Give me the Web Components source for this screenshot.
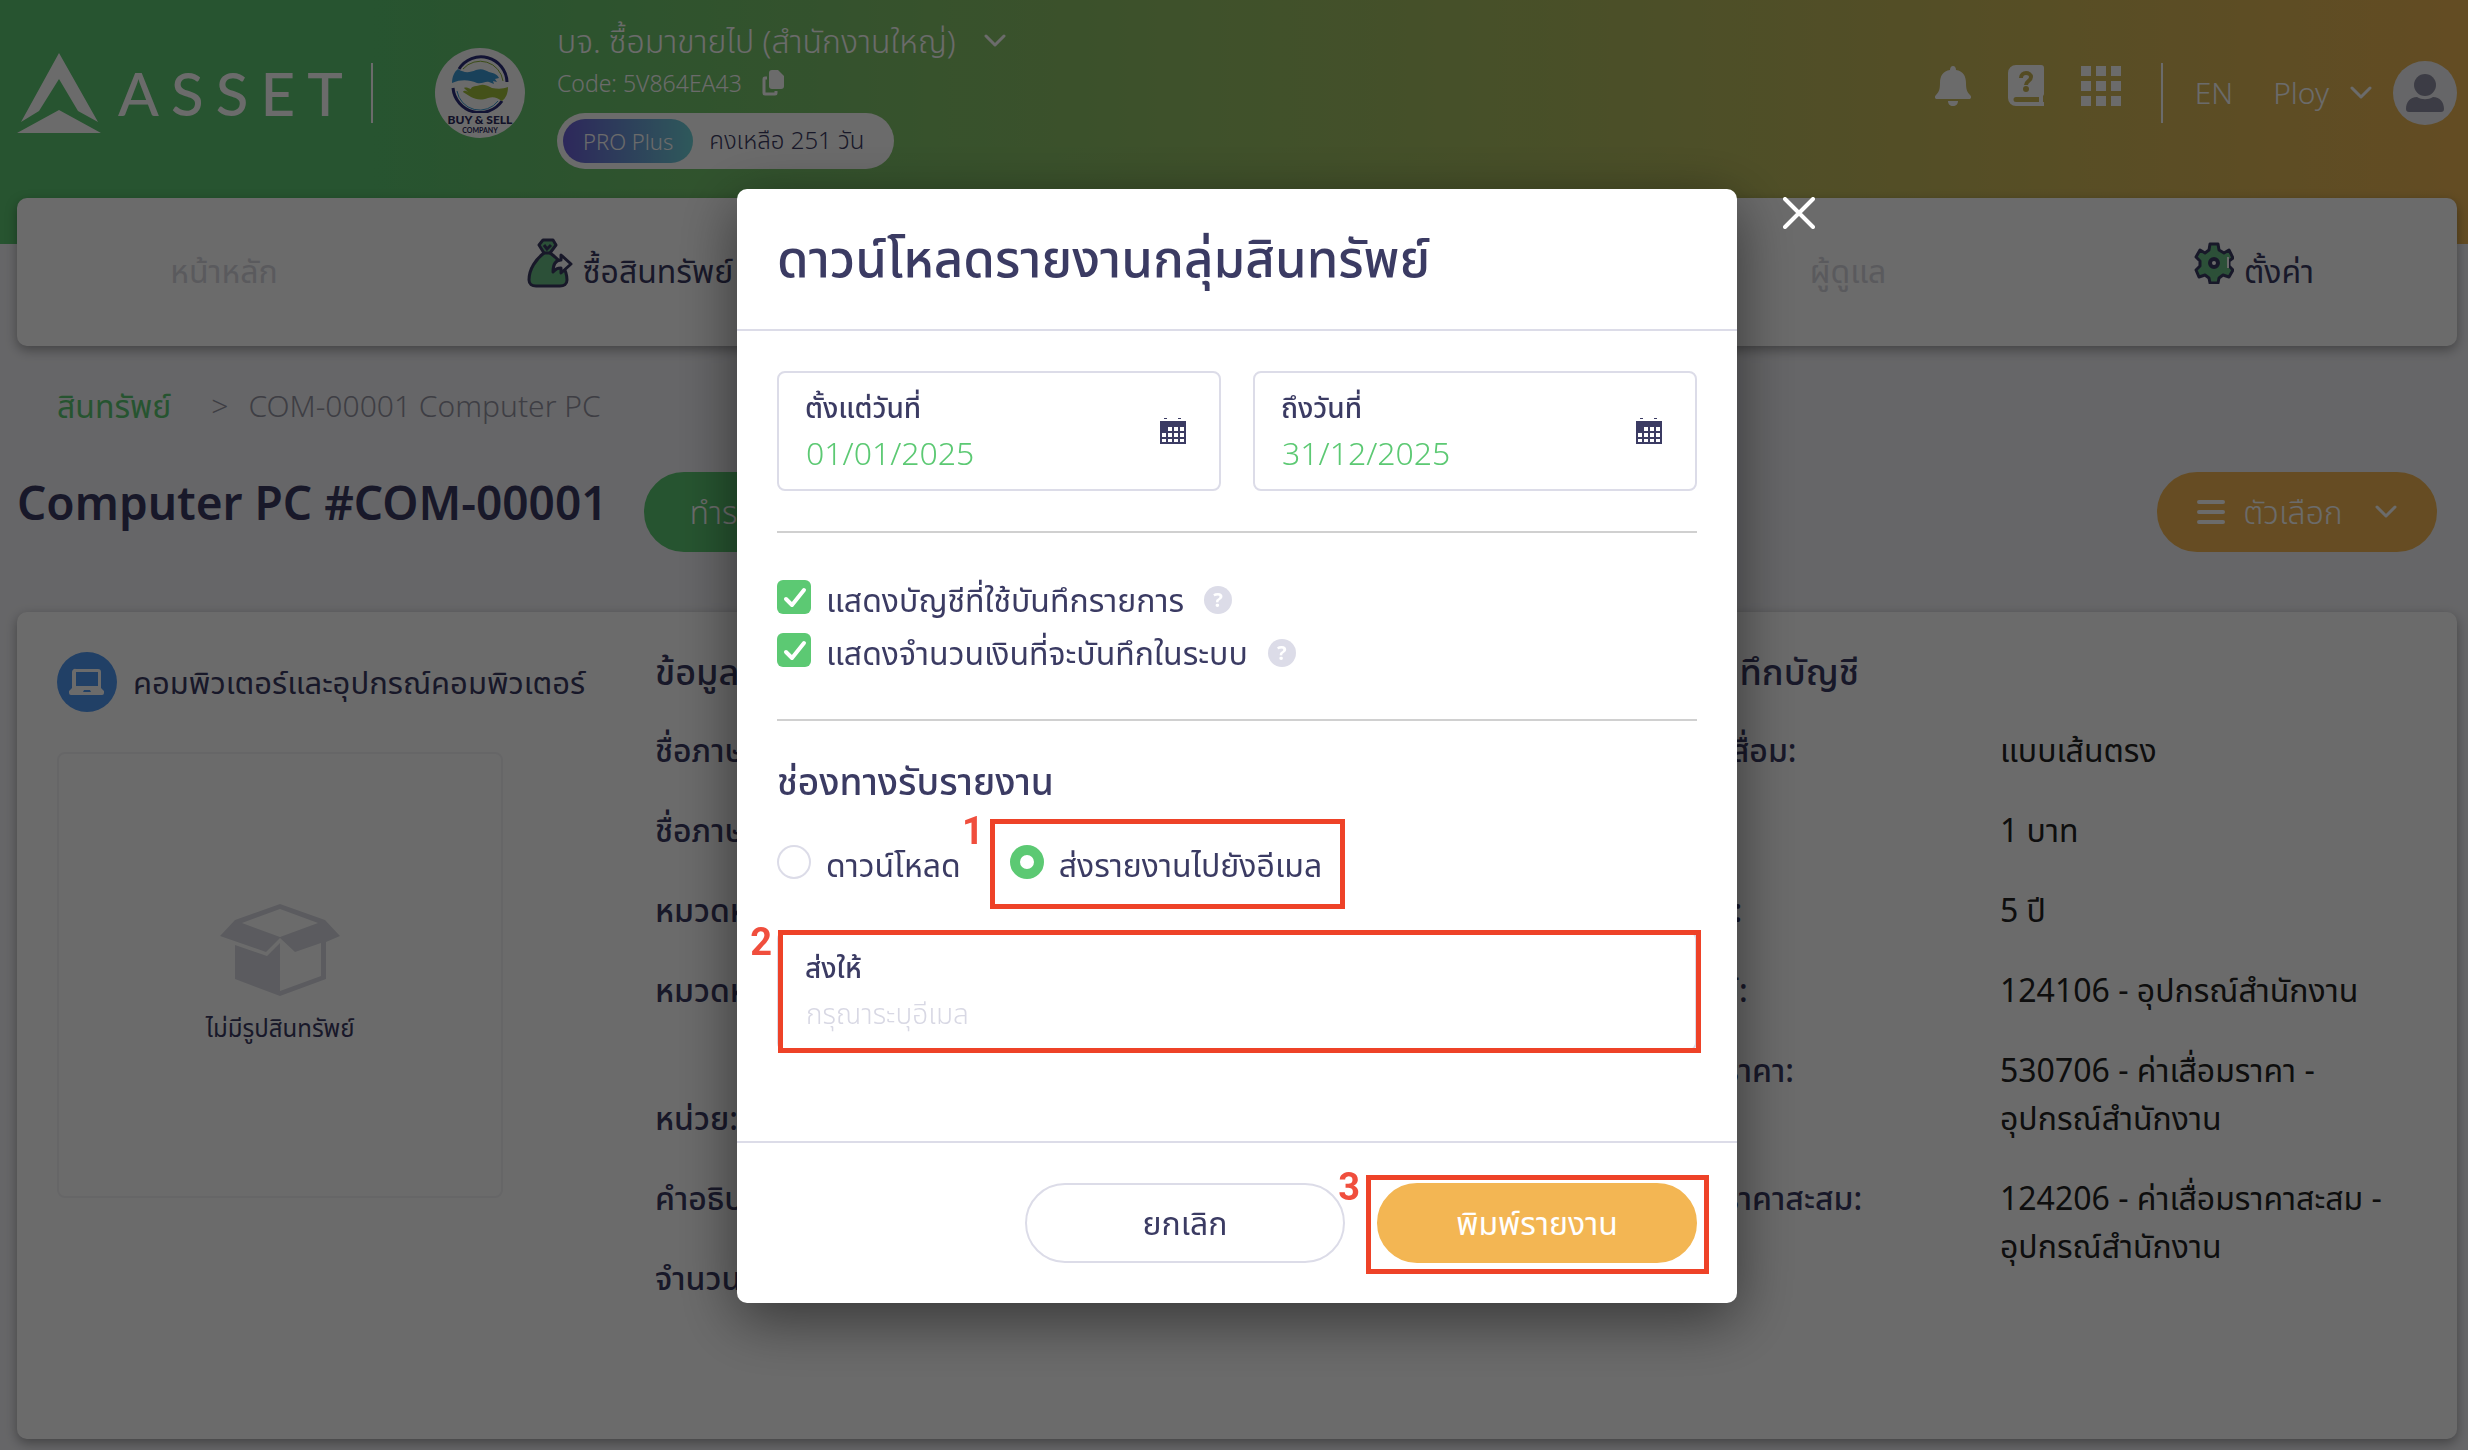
<!DOCTYPE html>
<html lang="th">
<head>
<meta charset="utf-8">
<title>Asset</title>
<style>
  body {
    margin: 0;
    font-family: "Noto Sans", "Noto Sans Thai", sans-serif;
    font-size: 32px;
    font-weight: 400;
    line-height: 48px;
    color: #3b3b63;
    --green: #5cc973;
    --orange: #f3b653;
    --line: #dcdce8;
    --mark: #ee4228;
  }
</style>
</head>
<body>
<asset-app></asset-app>

<script>
// every icon of the app, by name
const ICONS = {
  logo: ['0 0 84 80', '<path fill="#fff" d="M42 0 81 69 61 58 42 26 22 58 4 69ZM42 57 84 80H0Z"/>'],
  chevron: ['0 0 22 14', '<path fill="none" stroke="currentColor" stroke-width="3" stroke-linecap="round" stroke-linejoin="round" d="m2 2 9 9 9-9"/>'],
  copy: ['0 0 22 26', '<path fill="currentColor" d="M10 0h6l6 6v10a3 3 0 0 1-3 3h-9a3 3 0 0 1-3-3V3a3 3 0 0 1 3-3Z"/><path fill="none" stroke="currentColor" stroke-width="3" d="M5 8H3a1 1 0 0 0-1 1v14a1 1 0 0 0 1 1h10a1 1 0 0 0 1-1v-2"/>'],
  bell: ['0 0 36 40', '<path fill="currentColor" d="M18 0c2 0 3 2 3 4 7 1 10 6 10 13 0 6 1 9 4 12 2 2 1 4-1 4H2c-2 0-3-2-1-4 3-3 4-6 4-12C5 10 8 5 15 4c0-2 1-4 3-4Zm-5 35h10c0 3-2 5-5 5s-5-2-5-5Z"/>'],
  book: ['0 0 36 42', '<path fill="currentColor" fill-rule="evenodd" d="M8 0h25a3 3 0 0 1 3 3v26a3 3 0 0 1-1 2v6h1v4H8a8 8 0 0 1-8-8V8a8 8 0 0 1 8-8Zm0 32a2 2 0 0 0 0 5h23v-5Z"/><path fill="none" stroke="#c9b452" stroke-width="4" d="M13 13c0-7 10-6 10-1 0 4-5 4-5 8"/><circle cx="18" cy="24" r="3" fill="#c9b452"/>'],
  grid: ['0 0 40 40', '<path fill="currentColor" d="M0 0h10v10H0zM15 0h10v10H15zM30 0h10v10H30zM0 15h10v10H0zM15 15h10v10H15zM30 15h10v10H30zM0 30h10v10H0zM15 30h10v10H15zM30 30h10v10H30z"/>'],
  user: ['0 0 64 64', '<circle cx="32" cy="32" r="32" fill="#f4f4f8"/><circle cx="32" cy="24" r="11" fill="#9090a4"/><path fill="#9090a4" d="M13 48c0-7 4-12 11-12 5 3 11 3 16 0 7 0 11 5 11 12a3 3 0 0 1-3 3H16a3 3 0 0 1-3-3Z"/>'],
  bag: ['0 0 46 50', '<path fill="#69bf86" stroke="#3b3b63" stroke-width="3" stroke-linejoin="round" d="M16 2h10l3 5-6 8c9 6 17 16 17 27 0 4-3 6-7 6H9c-4 0-7-2-7-6 0-11 7-21 15-27l-5-8Z"/><path fill="none" stroke="#3b3b63" stroke-width="3" d="M15 15h10m-8-8 3 4 4-4"/><path fill="#fff" stroke="#3b3b63" stroke-width="3" stroke-linejoin="round" d="M26 34c0-9 3-12 8-12v-5l10 9-10 9v-5c-4 0-5 1-8 4Z"/>'],
  gear: ['0 0 40 42', '<path fill="#69bf86" stroke="#3b3b63" stroke-width="3" stroke-linejoin="round" d="M16 2h8l1 6 5 3 5-3 4 8-4 3v5l4 4-4 7-6-2-4 3-1 5h-8l-1-5-4-3-6 2-3-7 4-4v-5l-4-4 4-7 5 3 4-3Z"/><path stroke="#fff" stroke-width="2" d="M34 15v11"/><circle cx="20" cy="21" r="4" fill="#fff" stroke="#3b3b63" stroke-width="4"/>'],
  laptop: ['0 0 60 60', '<circle cx="30" cy="30" r="30" fill="#4f98f2"/><path fill="#fff" fill-rule="evenodd" d="M19 17h22a3 3 0 0 1 3 3v16l3 3v2a2 2 0 0 1-2 2H14a2 2 0 0 1-2-2v-2l3-3V20a3 3 0 0 1 4-3Zm0 3v14h22V20Zm8 18-1 2h8l-1-2Z"/>'],
  box: ['0 0 120 92', '<path fill="#d9dae2" fill-rule="evenodd" d="M60 0 105 16 120 32 106 38v37L60 92 15 75V41l32 11 13-13v48l41-15V39L75 48 60 34 46 48 0 32 15 16Zm0 5L22 19l38 14 38-14Z"/>'],
  menu: ['0 0 28 24', '<path stroke="currentColor" stroke-width="4" stroke-linecap="round" d="M2 2h24M2 12h24M2 22h24"/>'],
  calendar: ['0 0 26 26', '<path fill="#3b3b63" fill-rule="evenodd" d="M4 0h3v1H4zM18 0h3v1h-3zM0 3h26v23H0zM8 9v4h4V9zm6 0v4h4V9zm6 0v4h4V9zM2 15v4h4v-4zm6 0v4h4v-4zm6 0v4h4v-4zm6 0v4h4v-4zM2 21v3h4v-3zm6 0v3h4v-3zm6 0v3h4v-3zm6 0v3h4v-3z"/>'],
  close: ['0 0 32 32', '<path fill="none" stroke="#fff" stroke-width="4" stroke-linecap="round" d="m2 2 28 28M30 2 2 30"/>'],
  hands: ['0 0 58 58', '<path fill="none" stroke="#2d2f7c" stroke-width="3" d="M8 14A26 26 0 0 1 56 27M2 33a27 27 0 0 0 49 13"/><path fill="none" stroke="#8fb63a" stroke-width="1" d="M12 14a23 23 0 0 1 40 12"/><path fill="none" stroke="#3c9bd6" stroke-width="1" d="M6 36a23 23 0 0 0 41 10"/><path fill="#3c9bd6" d="M1 28c0-6 2-11 6-14 6 4 11 4 18 1 6-2 9 0 13 2 5 1 9 3 10 6l-4 1 2 3-4-1 1 3-5-2c-4-1-6 2-12 1-8-3-15-4-25 0Z"/><path fill="#a3c13c" d="M57 32c0 6-2 11-6 14-5-3-8-5-14-3-8 3-12 1-17-1l-8-5c1-2 3-1 5 0l-4-4c2-1 4 0 7 1 0-3 6-3 10-4 5-1 8 2 11 3 6 1 11 1 16-1Z"/>']
};

// attach an open shadow root and fill it
function render(el, css, html) {
  el.attachShadow({ mode: 'open' }).innerHTML =
    `<style>*{box-sizing:border-box}${css}</style>${html}`;
}

// <app-icon name="bell">, drawn at its own size
class AppIcon extends HTMLElement {
  connectedCallback() {
    const [box, shape] = ICONS[this.getAttribute('name')];
    const size = box.split(' ');
    render(this, `
      :host { display: block; flex: none; }
      svg { display: block; }
    `, `<svg viewBox="${box}" width="${size[2]}" height="${size[3]}" aria-hidden="true">${shape}</svg>`);
  }
}

class PillButton extends HTMLElement {
  connectedCallback() {
    render(this, `
      :host { display: block; }
      button {
        display: flex; align-items: center; justify-content: center; gap: 18px;
        width: 100%; height: 80px; padding: 0 44px;
        border: 2px solid var(--pill, transparent); border-radius: 40px;
        background: var(--pill); color: #fff; font: inherit;
        white-space: nowrap;
      }
      :host([kind="green"]) { --pill: var(--green); }
      :host([kind="orange"]) { --pill: var(--orange); }
      :host([kind="plain"]) button { background: #fff; border-color: var(--line); color: #3b3b63; }
    `, `<button type="button"><slot></slot></button>`);
  }
}

class CompanyBadge extends HTMLElement {
  connectedCallback() {
    render(this, `
      :host {
        display: flex; flex-direction: column; align-items: center;
        width: 90px; height: 90px; padding-top: 7px; border-radius: 50%;
        background: #fff; color: #2b2b60; font-family: Lato, sans-serif; text-align: center;
      }
      b { font-size: 12px; font-weight: 900; line-height: 14px; white-space: nowrap; }
      small { font-size: 7px; font-weight: 700; line-height: 7px; }
    `, `<app-icon name="hands"></app-icon><b>BUY &amp; SELL</b><small>COMPANY</small>`);
  }
}

class AppHeader extends HTMLElement {
  connectedCallback() {
    render(this, `
      :host { display: flex; align-items: center; height: 186px; padding: 0 11px 0 17px;
        color: #fff; font-weight: 300; }
      .word { display: flex; justify-content: space-between; width: 225px; margin-left: 17px;
        font: 500 60px/56px Lato, sans-serif; }
      .bar { width: 2px; height: 60px; background: currentColor; }
      .word + .bar { margin: 0 62px 0 28px; }
      .company { margin-left: 32px; }
      .name, .code { display: flex; align-items: center; white-space: nowrap; }
      .name { gap: 28px; }
      .code { gap: 20px; margin-top: 2px; font-size: 23px; line-height: 32px; }
      .plan { display: inline-flex; align-items: center; gap: 16px; height: 56px; margin-top: 14px;
        padding: 0 30px 0 6px; border-radius: 28px; background: #fff; color: #3b3b63;
        font-size: 24px; line-height: 44px; white-space: nowrap; }
      .plan span { padding-bottom: 3px; }
      .plan b { padding: 0 20px; border-radius: 22px; color: #fff; font-size: 22px; line-height: 44px;
        font-weight: 300; background: linear-gradient(to right, #6b5fd8, #6fd3d8); }
      .tools { display: flex; align-items: center; margin-left: auto; font-size: 30px; }
      .icons { display: flex; align-items: center; gap: 37px; padding-bottom: 14px; }
      .tools .bar { margin: 0 32px 0 40px; }
      a { color: inherit; text-decoration: none; }
      .user { display: flex; align-items: center; gap: 21px; margin-left: 40px; }
    `, `
      <app-icon name="logo"></app-icon>
      <div class="word"><span>A</span><span>S</span><span>S</span><span>E</span><span>T</span></div>
      <div class="bar"></div>
      <company-badge></company-badge>
      <div class="company">
        <div class="name">บจ. ซื้อมาขายไป (สำนักงานใหญ่) <app-icon name="chevron"></app-icon></div>
        <div class="code">Code: 5V864EA43 <app-icon name="copy"></app-icon></div>
        <div class="plan"><b>PRO Plus</b><span>คงเหลือ 251 วัน</span></div>
      </div>
      <div class="tools">
        <div class="icons">
          <app-icon name="bell"></app-icon>
          <app-icon name="book"></app-icon>
          <app-icon name="grid"></app-icon>
        </div>
        <div class="bar"></div>
        <a href="#en">EN</a>
        <div class="user">Ploy <app-icon name="chevron"></app-icon> <app-icon name="user"></app-icon></div>
      </div>
    `);
  }
}

class NavBar extends HTMLElement {
  connectedCallback() {
    render(this, `
      :host { display: block; margin: 12px 11px 0 17px; border-radius: 10px; background: #fff;
        box-shadow: 0 4px 12px rgba(0, 0, 0, .35); }
      nav { display: grid; grid-template-columns: repeat(6, 1fr); align-items: center; height: 148px;
        padding: 0 0 3px 4px; }
      a { display: flex; align-items: center; justify-content: center; gap: 10px;
        color: #3b3b63; text-decoration: none; white-space: nowrap; }
      a app-icon { padding-bottom: 16px; }
      .off { color: #d6d6de; }
    `, `
      <nav>
        <a class="off" href="#home">หน้าหลัก</a>
        <a href="#buy"><app-icon name="bag"></app-icon>ซื้อสินทรัพย์</a>
        <span></span>
        <span></span>
        <a class="off" href="#admin">ผู้ดูแล</a>
        <a href="#settings"><app-icon name="gear"></app-icon>ตั้งค่า</a>
      </nav>
    `);
  }
}

class PageHead extends HTMLElement {
  connectedCallback() {
    render(this, `
      :host { display: block; padding: 36px 31px 0 17px; }
      .crumbs { display: flex; padding-left: 40px; color: #9494a2; font-size: 30px; font-weight: 300; white-space: nowrap; }
      .crumbs a { color: var(--green); text-decoration: none; font-size: 32px; font-weight: 400; }
      .crumbs span { margin: 0 20px 0 40px; }
      .row { display: flex; align-items: flex-start; margin-top: 42px; }
      h1 { margin: 0 36px 0 0; font-size: 46px; line-height: 60px; font-weight: 600; white-space: nowrap; }
      pill-button { font-weight: 300; }
      [kind="orange"] { width: 280px; margin-left: auto; }
      [kind="orange"] app-icon:last-child { margin-left: 14px; }
    `, `
      <div class="crumbs"><a href="#assets">สินทรัพย์</a><span>&gt;</span>COM-00001 Computer PC</div>
      <div class="row">
        <h1>Computer PC #COM-00001</h1>
        <pill-button kind="green">ทำรายการ</pill-button>
        <pill-button kind="orange"><app-icon name="menu"></app-icon>ตัวเลือก<app-icon name="chevron"></app-icon></pill-button>
      </div>
    `);
  }
}

// heading with a list of <detail-row> under it
class DetailList extends HTMLElement {
  connectedCallback() {
    render(this, `
      :host { display: block; }
      h2 { margin: 0 0 34px; font-size: 36px; line-height: 40px; font-weight: 500; white-space: nowrap; }
      .rows { display: flex; flex-direction: column; gap: 32px; }
    `, `<h2>${this.getAttribute('heading')}</h2><div class="rows"><slot></slot></div>`);
  }
}

class DetailRow extends HTMLElement {
  connectedCallback() {
    render(this, `
      :host { display: flex; }
      :host([tall]) { min-height: 96px; }
      b { flex: none; width: 444px; font-weight: 500; white-space: nowrap; }
      div { color: #222; }
    `, `<b>${this.getAttribute('label')}</b><div><slot></slot></div>`);
  }
}

class AssetCard extends HTMLElement {
  connectedCallback() {
    render(this, `
      :host { display: grid; grid-template-columns: 558px 1fr 1fr; column-gap: 40px;
        min-height: 827px; margin: 60px 11px 0 17px; padding: 40px; border-radius: 10px;
        background: #fff; box-shadow: 0 4px 12px rgba(0, 0, 0, .35); }
      .kind { display: flex; align-items: center; gap: 16px; font-size: 31px; white-space: nowrap; }
      .photo { display: flex; flex-direction: column; align-items: center; justify-content: center;
        gap: 14px; width: 80%; height: 446px; margin-top: 40px; border: 2px solid #f3f3f6;
        border-radius: 8px; font-size: 24px; line-height: 36px; }
      .line { white-space: nowrap; }
    `, `
      <div>
        <div class="kind"><app-icon name="laptop"></app-icon>คอมพิวเตอร์และอุปกรณ์คอมพิวเตอร์</div>
        <div class="photo"><app-icon name="box"></app-icon>ไม่มีรูปสินทรัพย์</div>
      </div>
      <detail-list heading="ข้อมูลทั่วไป">
        <detail-row label="ชื่อภาษาไทย:"></detail-row>
        <detail-row label="ชื่อภาษาอังกฤษ:"></detail-row>
        <detail-row label="หมวดหมู่:"></detail-row>
        <detail-row label="หมวดหมู่:" tall></detail-row>
        <detail-row label="หน่วย:"></detail-row>
        <detail-row label="คำอธิบาย:"></detail-row>
        <detail-row label="จำนวน:"></detail-row>
      </detail-list>
      <detail-list heading="ข้อมูลการบันทึกบัญชี">
        <detail-row label="วิธีคำนวณค่าเสื่อม:">แบบเส้นตรง</detail-row>
        <detail-row label="มูลค่าซาก:">1 บาท</detail-row>
        <detail-row label="อายุการใช้งาน:">5 ปี</detail-row>
        <detail-row label="บัญชีสินทรัพย์:">124106 - อุปกรณ์สำนักงาน</detail-row>
        <detail-row label="บัญชีค่าเสื่อมราคา:">530706 - ค่าเสื่อมราคา -<br><span class="line">อุปกรณ์สำนักงาน</span></detail-row>
        <detail-row label="บัญชีค่าเสื่อมราคาสะสม:">124206 - ค่าเสื่อมราคาสะสม -<br><span class="line">อุปกรณ์สำนักงาน</span></detail-row>
      </detail-list>
    `);
  }
}

// bordered box with a small label over its input
class FieldBox extends HTMLElement {
  connectedCallback() {
    const value = this.getAttribute('value') || '';
    const hint = this.getAttribute('placeholder') || '';
    render(this, `
      :host { display: flex; align-items: center; height: 120px; padding: 0 33px 0 26px;
        border: 2px solid var(--line); border-radius: 8px; background: #fff; }
      label { display: block; font-size: 28px; line-height: 44px; font-weight: 500; }
      .text { flex: 1; min-width: 0; }
      input { display: block; width: 100%; height: 48px; padding: 0 1px; border: 0; outline: 0;
        background: none; color: var(--green); font: inherit; font-weight: 300; }
      input:placeholder-shown { font-size: 28px; }
      input::placeholder { color: #d8d8e4; opacity: 1; }
    `, `
      <div class="text">
        <label for="field">${this.getAttribute('label')}</label>
        <input id="field" type="text" value="${value}" placeholder="${hint}">
      </div>
      <slot></slot>
    `);
  }
}

// tick box or radio, by its type attribute
class ChoiceItem extends HTMLElement {
  connectedCallback() {
    const type = this.getAttribute('type');
    render(this, `
      :host { display: flex; align-items: center; gap: 20px; line-height: 53px; white-space: nowrap; }
      label { display: flex; align-items: flex-start; gap: 15px; }
      input { appearance: none; flex: none; width: 34px; height: 34px; margin: 7px 0 0;
        border: 2px solid var(--line); border-radius: 6px; background: #fff; }
      input[type="radio"] { border-radius: 50%; }
      input[type="radio"]:checked { border: 10px solid var(--green); }
      input[type="checkbox"]:checked { border: 0;
        background: var(--green) url("data:image/svg+xml,%3Csvg xmlns='http://www.w3.org/2000/svg' viewBox='0 0 34 34'%3E%3Cpath d='m9 19 6 6L27 10' fill='none' stroke='%23fff' stroke-width='4' stroke-linecap='round' stroke-linejoin='round'/%3E%3C/svg%3E") center / 34px; }
      .help { width: 28px; height: 28px; border-radius: 50%; background: var(--line); color: #fff;
        font-size: 20px; font-weight: 700; line-height: 28px; text-align: center; }
    `, `
      <label><input type="${type}" name="choice" ${this.hasAttribute('checked') ? 'checked' : ''}><slot></slot></label>
      ${this.hasAttribute('help') ? '<span class="help">?</span>' : ''}
    `);
  }
}

// numbered red frame lying over whatever it wraps
class StepMark extends HTMLElement {
  connectedCallback() {
    render(this, `
      :host { display: block; position: relative; }
      .frame { position: absolute; inset: var(--reach, 0); border: 5px solid var(--mark); pointer-events: none; }
      .no { position: absolute; right: 100%; top: -14px; padding-right: 11px; color: #f04e3d;
        font: 700 38px/42px Roboto, sans-serif; }
    `, `<slot></slot><div class="frame"><span class="no">${this.getAttribute('no')}</span></div>`);
  }
}

class ReportDialog extends HTMLElement {
  connectedCallback() {
    render(this, `
      :host { position: fixed; inset: 0; display: flex; justify-content: center; align-items: flex-start;
        padding: 189px 0 0 6px; background: rgba(0, 0, 0, .58); }
      section { position: relative; width: 1000px; border-radius: 10px; background: #fff;
        box-shadow: 0 16px 60px rgba(0, 0, 0, .5); }
      .close { position: absolute; left: 100%; top: 8px; margin-left: 46px; padding: 0; border: 0; background: none; }
      h2 { margin: 0; padding: 39px 40px 43px; border-bottom: 2px solid var(--line);
        font-size: 51px; line-height: 58px; font-weight: 500; white-space: nowrap; }
      .body { padding: 40px 40px 90px; }
      .dates { display: grid; grid-template-columns: 1fr 1fr; gap: 32px; }
      hr { height: 2px; margin: 40px 0; border: 0; background: #d0d0d0; }
      h3 { margin: 0; font-size: 37px; line-height: 40px; font-weight: 500; }
      .radios { display: flex; gap: 49px; margin: 37px 0 40px; }
      .radios step-mark { --reach: -19px -23px -18px -20px; }
      .mail { --reach: -1px -4px -2px 1px; }
      footer { display: flex; justify-content: flex-end; gap: 32px; padding: 40px; border-top: 2px solid var(--line); }
      footer > *, footer pill-button { width: 320px; }
      footer step-mark { --reach: -8px -12px -11px -11px; }
    `, `
      <section role="dialog" aria-labelledby="title">
        <button class="close" type="button" aria-label="ปิด"><app-icon name="close"></app-icon></button>
        <h2 id="title">ดาวน์โหลดรายงานกลุ่มสินทรัพย์</h2>
        <div class="body">
          <div class="dates">
            <field-box label="ตั้งแต่วันที่" value="01/01/2025"><app-icon name="calendar"></app-icon></field-box>
            <field-box label="ถึงวันที่" value="31/12/2025"><app-icon name="calendar"></app-icon></field-box>
          </div>
          <hr>
          <choice-item type="checkbox" checked help>แสดงบัญชีที่ใช้บันทึกรายการ</choice-item>
          <choice-item type="checkbox" checked help>แสดงจำนวนเงินที่จะบันทึกในระบบ</choice-item>
          <hr>
          <h3>ช่องทางรับรายงาน</h3>
          <div class="radios">
            <choice-item type="radio">ดาวน์โหลด</choice-item>
            <step-mark no="1"><choice-item type="radio" checked>ส่งรายงานไปยังอีเมล</choice-item></step-mark>
          </div>
          <step-mark class="mail" no="2"><field-box label="ส่งให้" placeholder="กรุณาระบุอีเมล"></field-box></step-mark>
        </div>
        <footer>
          <pill-button kind="plain">ยกเลิก</pill-button>
          <step-mark no="3"><pill-button kind="orange">พิมพ์รายงาน</pill-button></step-mark>
        </footer>
      </section>
    `);
  }
}

class AssetApp extends HTMLElement {
  connectedCallback() {
    render(this, `
      :host { display: block; min-height: 100vh; padding-bottom: 11px; box-sizing: border-box;
        background: linear-gradient(to right, #5dc872 15%, #f0b553 102%) top / 100% 244px no-repeat, #f3f3f7; }
    `, `
      <app-header></app-header>
      <nav-bar></nav-bar>
      <page-head></page-head>
      <asset-card></asset-card>
      <report-dialog></report-dialog>
    `);
  }
}

customElements.define('app-icon', AppIcon);
customElements.define('pill-button', PillButton);
customElements.define('company-badge', CompanyBadge);
customElements.define('app-header', AppHeader);
customElements.define('nav-bar', NavBar);
customElements.define('page-head', PageHead);
customElements.define('detail-row', DetailRow);
customElements.define('detail-list', DetailList);
customElements.define('asset-card', AssetCard);
customElements.define('field-box', FieldBox);
customElements.define('choice-item', ChoiceItem);
customElements.define('step-mark', StepMark);
customElements.define('report-dialog', ReportDialog);
customElements.define('asset-app', AssetApp);
</script>
</body>
</html>
